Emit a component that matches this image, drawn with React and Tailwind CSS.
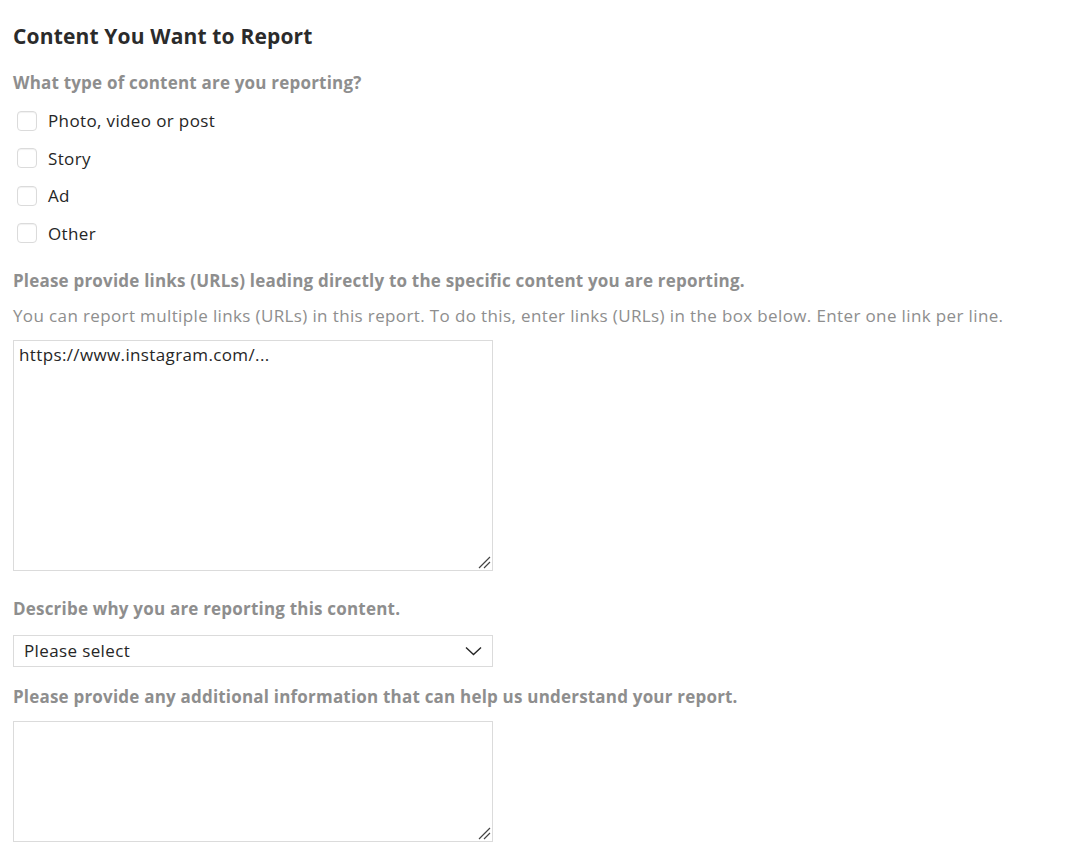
import { useState } from "react";

const options = ["Photo, video or post", "Story", "Ad", "Other"];

function ResizeGrip() {
  return (
    <svg className="pointer-events-none absolute right-[2px] bottom-[2px]" width="13" height="13" viewBox="0 0 13 13">
      <path d="M1 12 L12 1 M6 12 L12 6" stroke="#444" strokeWidth="1.2" />
    </svg>
  );
}

export default function App() {
  const [checked, setChecked] = useState({});

  return (
    <div className="min-h-screen bg-white px-[13px] pt-[21px] text-[#262626]" style={{ fontFamily: '"Open Sans", "Liberation Sans", sans-serif' }}>
      <h2 className="text-[21px] font-bold leading-[30px] tracking-[0.15px] text-[#2b2b2b]">Content You Want to Report</h2>

      <p className="mt-[21px] text-[17px] font-bold leading-[22px] tracking-[0.2px] text-[#8e8e8e]">What type of content are you reporting?</p>

      <div className="mt-[8px] flex flex-col">
        {options.map((o) => (
          <label key={o} className="flex h-[37.5px] items-center gap-[11px] pl-[4px] text-[17px] tracking-[0.37px]">
            <input
              type="checkbox"
              className="h-[20px] w-[20px] appearance-none rounded-[4px] border border-[#dbdbdb] bg-white shadow-[inset_0_1px_1px_rgba(0,0,0,0.06)]"
              checked={!!checked[o]}
              onChange={() => setChecked({ ...checked, [o]: !checked[o] })}
            />
            <span>{o}</span>
          </label>
        ))}
      </div>

      <p className="mt-[18px] text-[17px] font-bold leading-[22px] tracking-[0.2px] text-[#8e8e8e]">
        Please provide links (URLs) leading directly to the specific content you are reporting.
      </p>
      <p className="mt-[13px] text-[17px] leading-[22px] tracking-[0.37px] text-[#8e8e8e]">
        You can report multiple links (URLs) in this report. To do this, enter links (URLs) in the box below. Enter one link per line.
      </p>

      <div className="relative mt-[13px] w-[480px]">
        <textarea
          className="block h-[231px] w-full resize-none border border-[#dbdbdb] px-[5px] py-[3px] text-[17px] leading-[22px] tracking-[0.37px] text-[#262626] outline-none"
          defaultValue="https://www.instagram.com/..."
        />
        <ResizeGrip />
      </div>

      <p className="mt-[27px] text-[17px] font-bold leading-[22px] tracking-[0.2px] text-[#8e8e8e]">Describe why you are reporting this content.</p>

      <div className="relative mt-[15px] w-[480px]">
        <div className="flex h-[32px] items-center border border-[#dbdbdb] pl-[10px] pr-[10px] text-[17px] tracking-[0.37px] text-[#262626]">
          <span className="flex-1">Please select</span>
          <svg width="17" height="10" viewBox="0 0 17 10">
            <path d="M1 1.5 L8.5 8.5 L16 1.5" fill="none" stroke="#262626" strokeWidth="1.4" />
          </svg>
        </div>
      </div>

      <p className="mt-[19px] text-[17px] font-bold leading-[22px] tracking-[0.2px] text-[#8e8e8e]">
        Please provide any additional information that can help us understand your report.
      </p>

      <div className="relative mt-[13px] w-[480px]">
        <textarea className="block h-[121px] w-full resize-none border border-[#dbdbdb] px-[5px] py-[3px] text-[17px] outline-none" />
        <ResizeGrip />
      </div>
    </div>
  );
}
